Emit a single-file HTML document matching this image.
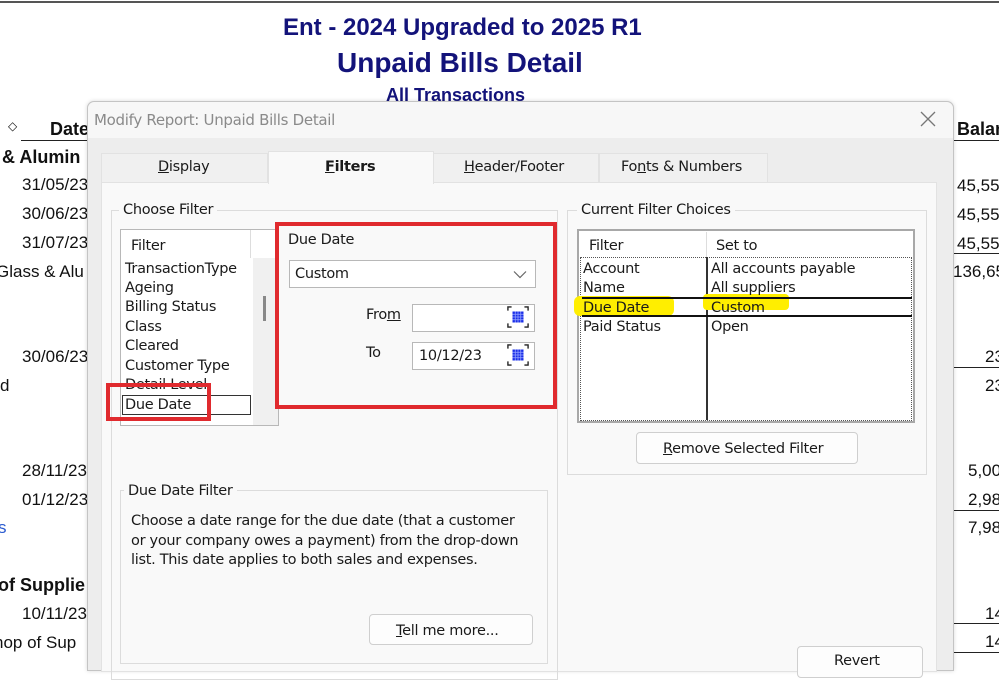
<!DOCTYPE html>
<html><head><style>
*{margin:0;padding:0;box-sizing:border-box}
body{width:999px;height:664px;background:#fff;position:relative;overflow:hidden;font-family:"Liberation Sans",Arial,sans-serif;}
.a{position:absolute;white-space:nowrap}
.r{font-size:17px;color:#111}
.d{font-family:"DejaVu Sans","Liberation Sans",sans-serif;font-size:14.5px;color:#1a1a1a;letter-spacing:-0.3px;margin-top:1px}
.b{background:#fff;border:1px solid #b8b8b8}
u{text-decoration:underline}
.cal{position:absolute;width:22px;height:22px;border:1px dashed #333;background:#fff}
</style></head><body>
<div class="a" style="left:0;top:1px;width:999px;height:2px;background:#555"></div>
<div class="a" style="left:283px;top:14px;font-size:24px;font-weight:bold;color:#13137a">Ent - 2024 Upgraded to 2025 R1</div>
<div class="a" style="left:337px;top:47px;font-size:28px;font-weight:bold;color:#13137a">Unpaid Bills Detail</div>
<div class="a" style="left:386px;top:85px;font-size:18px;font-weight:bold;color:#13137a">All Transactions</div>
<div class="a r" style="left:8px;top:119px;font-size:12px">◇</div>
<div class="a r" style="left:50px;top:119px;font-weight:bold;font-size:18px">Date</div>
<div class="a" style="left:21px;top:140px;width:70px;height:1px;background:#222"></div>
<div class="a r" style="left:2px;top:147px;font-weight:bold;font-size:18px">&amp; Alumin</div>
<div class="a r" style="left:22px;top:175px">31/05/23</div>
<div class="a r" style="left:22px;top:204px">30/06/23</div>
<div class="a r" style="left:22px;top:233px">31/07/23</div>
<div class="a r" style="left:-4px;top:262px">Glass &amp; Alu</div>
<div class="a r" style="left:22px;top:347px">30/06/23</div>
<div class="a r" style="left:0px;top:376px">d</div>
<div class="a r" style="left:22px;top:461px">28/11/23</div>
<div class="a r" style="left:22px;top:490px">01/12/23</div>
<div class="a r" style="left:-2px;top:518px;color:#2a5bd0">s</div>
<div class="a r" style="left:-2px;top:575px;font-weight:bold;font-size:18px">of Supplie</div>
<div class="a r" style="left:22px;top:604px">10/11/23</div>
<div class="a r" style="left:-6px;top:633px">nop of Sup</div>
<!-- right column -->
<div class="a r" style="left:957px;top:119px;font-weight:bold;font-size:18px">Balance</div>
<div class="a" style="left:953px;top:140px;width:46px;height:1px;background:#222"></div>
<div class="a r" style="left:957px;top:176px">45,556</div>
<div class="a r" style="left:957px;top:205px">45,556</div>
<div class="a r" style="left:957px;top:234px">45,556</div>
<div class="a" style="left:953px;top:253px;width:46px;height:1px;background:#222"></div>
<div class="a r" style="left:953px;top:262px">136,65</div>
<div class="a r" style="left:985px;top:347px">23</div>
<div class="a" style="left:953px;top:367px;width:46px;height:1px;background:#222"></div>
<div class="a r" style="left:985px;top:376px">23</div>
<div class="a r" style="left:968px;top:461px">5,00</div>
<div class="a r" style="left:968px;top:490px">2,98</div>
<div class="a" style="left:953px;top:510px;width:46px;height:1px;background:#222"></div>
<div class="a r" style="left:968px;top:518px">7,98</div>
<div class="a r" style="left:985px;top:604px">14</div>
<div class="a" style="left:953px;top:623px;width:46px;height:1px;background:#222"></div>
<div class="a r" style="left:985px;top:632px">14</div>
<div class="a" style="left:953px;top:652px;width:46px;height:1px;background:#222"></div>

<!-- dialog -->
<div class="a" style="left:87px;top:101px;width:867px;height:570px;background:#ededed;border:1px solid #c4c4c4;border-radius:7px 7px 0 0;box-shadow:0 0 4px rgba(0,0,0,.15)"></div>
<div class="a" style="left:88px;top:102px;width:865px;height:36px;background:#f7f7f7;border-radius:7px 7px 0 0"></div>
<div class="a" style="left:94px;top:111px;font-family:'DejaVu Sans',sans-serif;font-size:15px;color:#8a8a8a;letter-spacing:-0.3px">Modify Report: Unpaid Bills Detail</div>
<svg class="a" style="left:920px;top:111px" width="16" height="16"><path d="M1 1L15 15M15 1L1 15" stroke="#777" stroke-width="1.3"/></svg>
<!-- tabs -->
<div class="a" style="left:101px;top:153px;width:167px;height:30px;background:#f0f0f0;border:1px solid #e2e2e2"></div>
<div class="a d" style="left:158px;top:158px"><u>D</u>isplay</div>
<div class="a" style="left:433px;top:153px;width:166px;height:30px;background:#f0f0f0;border:1px solid #e2e2e2"></div>
<div class="a d" style="left:464px;top:158px"><u>H</u>eader/Footer</div>
<div class="a" style="left:599px;top:153px;width:169px;height:30px;background:#f0f0f0;border:1px solid #e2e2e2"></div>
<div class="a d" style="left:621px;top:158px">Fo<u>n</u>ts &amp; Numbers</div>
<div class="a" style="left:101px;top:182px;width:836px;height:490px;background:#f9f9f9;border:1px solid #e2e2e2"></div>
<div class="a" style="left:268px;top:151px;width:166px;height:33px;background:#f9f9f9;border:1px solid #e2e2e2;border-bottom:none"></div>
<div class="a d" style="left:325px;top:158px;font-weight:bold"><u>F</u>ilters</div>

<!-- choose filter group -->
<div class="a" style="left:111px;top:210px;width:447px;height:470px;border:1px solid #dcdcdc"></div>
<div class="a d" style="left:119px;top:201px;background:#f9f9f9;padding:0 4px">Choose Filter</div>
<div class="a b" style="left:120px;top:229px;width:159px;height:197px"></div>
<div class="a" style="left:250px;top:230px;width:1px;height:28px;background:#ddd"></div>
<div class="a" style="left:253px;top:258px;width:25px;height:167px;background:#f0f0f0"></div>
<div class="a" style="left:263px;top:296px;width:3px;height:25px;background:#888"></div>
<div class="a d" style="left:131px;top:237px">Filter</div>
<div class="a d" style="left:125px;top:260px">TransactionType</div>
<div class="a d" style="left:125px;top:279px">Ageing</div>
<div class="a d" style="left:125px;top:298px">Billing Status</div>
<div class="a d" style="left:125px;top:318px">Class</div>
<div class="a d" style="left:125px;top:337px">Cleared</div>
<div class="a d" style="left:125px;top:357px">Customer Type</div>
<div class="a d" style="left:125px;top:376px">Detail Level</div>
<div class="a" style="left:122px;top:395px;width:129px;height:20px;border:1px solid #333;background:#fff"></div>
<div class="a d" style="left:125px;top:396px">Due Date</div>
<div class="a" style="left:106px;top:383px;width:105px;height:38px;border:4px solid #e02a2e"></div>
<!-- due date panel -->
<div class="a" style="left:275px;top:222px;width:282px;height:187px;border:4px solid #e02a2e"></div>
<div class="a d" style="left:288px;top:231px">Due Date</div>
<div class="a b" style="left:289px;top:260px;width:247px;height:28px"></div>
<div class="a d" style="left:295px;top:265px">Custom</div>
<svg class="a" style="left:513px;top:270px" width="14" height="9"><path d="M1 1.5L7 7.5L13 1.5" fill="none" stroke="#666" stroke-width="1.2"/></svg>
<div class="a d" style="left:366px;top:306px">Fro<u>m</u></div>
<div class="a b" style="left:412px;top:304px;width:123px;height:28px"></div>
<svg class="cal" style="left:507px;top:306px;border:none" width="24" height="24" viewBox="0 0 24 24"><path d="M1 5V1H5M19 1H23V5M23 19V23H19M5 23H1V19" fill="none" stroke="#222" stroke-width="1.5"/><rect x="6" y="6" width="12" height="12" fill="#1a2ee8"/><path d="M6 9H18M6 12H18M6 15H18M9 6V18M12 6V18M15 6V18" stroke="#9aa8ff" stroke-width="0.8"/></svg>
<div class="a d" style="left:366px;top:344px">To</div>
<div class="a b" style="left:412px;top:342px;width:123px;height:28px"></div>
<div class="a d" style="left:419px;top:347px">10/12/23</div>
<svg class="cal" style="left:507px;top:344px;border:none" width="24" height="24" viewBox="0 0 24 24"><path d="M1 5V1H5M19 1H23V5M23 19V23H19M5 23H1V19" fill="none" stroke="#222" stroke-width="1.5"/><rect x="6" y="6" width="12" height="12" fill="#1a2ee8"/><path d="M6 9H18M6 12H18M6 15H18M9 6V18M12 6V18M15 6V18" stroke="#9aa8ff" stroke-width="0.8"/></svg>
<!-- due date filter desc -->
<div class="a" style="left:120px;top:490px;width:428px;height:174px;border:1px solid #dcdcdc"></div>
<div class="a d" style="left:124px;top:482px;background:#f9f9f9;padding:0 4px">Due Date Filter</div>
<div class="a d" style="left:131px;top:511px;line-height:19.5px">Choose a date range for the due date (that a customer<br>or your company owes a payment) from the drop-down<br>list. This date applies to both sales and expenses.</div>
<div class="a" style="left:369px;top:614px;width:164px;height:31px;background:#fdfdfd;border:1px solid #cfcfcf;border-radius:4px"></div>
<div class="a d" style="left:396px;top:622px"><u>T</u>ell me more...</div>
<!-- current filter choices -->
<div class="a" style="left:567px;top:210px;width:360px;height:265px;border:1px solid #dcdcdc"></div>
<div class="a d" style="left:577px;top:201px;background:#f9f9f9;padding:0 4px">Current Filter Choices</div>
<div class="a" style="left:577px;top:229px;width:338px;height:194px;background:#fff;border:2px solid #a8a8a8"></div>
<div class="a" style="left:580px;top:257px;width:332px;height:164px;border:1px dotted #555"></div>
<div class="a" style="left:706px;top:257px;width:2px;height:163px;background:#333"></div>
<div class="a" style="left:706px;top:232px;width:1px;height:25px;background:#ddd"></div>
<div class="a d" style="left:589px;top:237px">Filter</div>
<div class="a d" style="left:716px;top:237px">Set to</div>
<div class="a" style="left:574px;top:296px;width:100px;height:20px;background:#ffee00;border-radius:6px"></div>
<div class="a" style="left:703px;top:294px;width:86px;height:16px;background:#ffee00;border-radius:4px"></div>
<div class="a" style="left:582px;top:297px;width:330px;height:1.5px;background:#111"></div>
<div class="a" style="left:582px;top:315px;width:330px;height:1.5px;background:#111"></div>
<div class="a d" style="left:583px;top:260px">Account</div>
<div class="a d" style="left:711px;top:260px">All accounts payable</div>
<div class="a d" style="left:583px;top:279px">Name</div>
<div class="a d" style="left:711px;top:279px">All suppliers</div>
<div class="a d" style="left:583px;top:299px">Due Date</div>
<div class="a d" style="left:711px;top:299px">Custom</div>
<div class="a d" style="left:583px;top:318px">Paid Status</div>
<div class="a d" style="left:711px;top:318px">Open</div>
<div class="a" style="left:636px;top:432px;width:222px;height:32px;background:#fdfdfd;border:1px solid #cfcfcf;border-radius:4px"></div>
<div class="a d" style="left:663px;top:440px"><u>R</u>emove Selected Filter</div>
<div class="a" style="left:797px;top:646px;width:126px;height:32px;background:#fdfdfd;border:1px solid #cfcfcf;border-radius:4px"></div>
<div class="a d" style="left:834px;top:652px">Revert</div>
</body></html>
